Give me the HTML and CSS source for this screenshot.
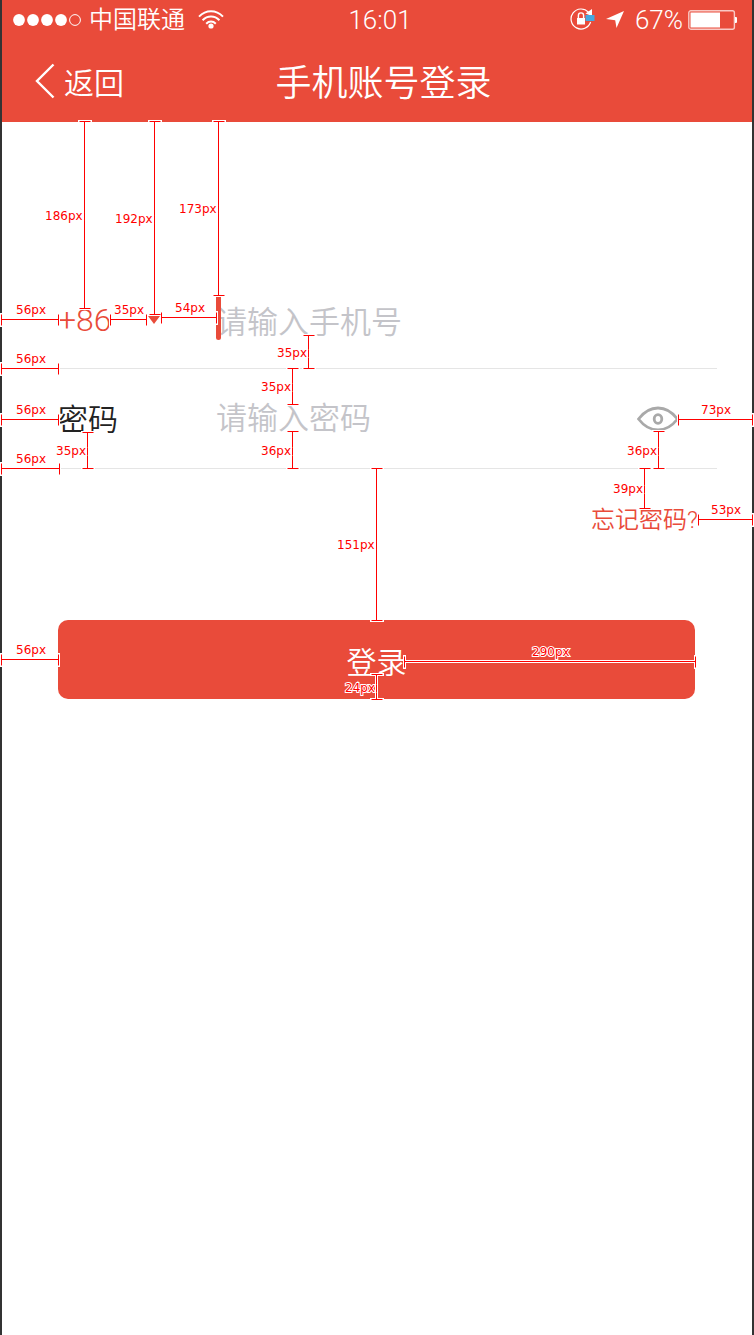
FILE: index.html
```
<!DOCTYPE html>
<html lang="zh-CN">
<head>
<meta charset="utf-8">
<meta name="viewport" content="width=device-width, initial-scale=1">
<title>手机账号登录</title>
<link rel="stylesheet" href="styles.css">
</head>
<body>
<div class="screen">
  <header class="header">
    <div class="status">
      <div class="status-left">
        <svg class="signal" width="70" height="14" viewBox="0 0 70 14" aria-hidden="true">
          <g fill="#fff"><circle cx="7" cy="7" r="5.9"/><circle cx="21" cy="7" r="5.9"/><circle cx="35" cy="7" r="5.9"/><circle cx="49" cy="7" r="5.9"/></g>
          <circle cx="63" cy="7" r="5.4" fill="none" stroke="#fff"/>
        </svg>
        <span class="carrier">中国联通</span>
        <svg class="wifi" width="26" height="20" viewBox="0 0 26 20" aria-hidden="true">
          <g fill="none" stroke="#fff" stroke-width="2"><path d="M1 6.600C8-.6 18-.6 25 6.600"/><path d="M4.600 10.200c4.800-5 12-5 16.800 0"/><path d="M8.200 13.700c2.800-2.800 6.800-2.800 9.600 0"/></g>
          <circle cx="13" cy="16" r="2.600" fill="#fff"/>
        </svg>
      </div>
      <time class="clock">16:01</time>
      <div class="status-right">
        <svg class="lock" width="26" height="22" viewBox="0 0 26 22" aria-hidden="true">
          <path d="M18.400 4.200A10 10 0 1 0 20.600 14" fill="none" stroke="#fff" stroke-width="1.200"/>
          <path d="M15.500 5.500L22 1v7z" fill="#fff"/>
          <path d="M7 10h8v6.500H7z" fill="#fff"/>
          <path d="M8.400 10V7.500a2.600 2.600 0 0 1 5.200 0V10" fill="none" stroke="#fff" stroke-width="1.400"/>
          <path d="M15.500 7h9v6h-9z" fill="#45a7df"/>
        </svg>
        <svg class="location" width="18" height="17" viewBox="0 0 18 17" aria-hidden="true"><path d="M18 0L10.500 17 9.200 9.200 0 8z" fill="#fff"/></svg>
        <span class="percent">67%</span>
        <svg class="battery" width="50" height="20" viewBox="0 0 50 20" aria-hidden="true">
          <rect x=".8" y=".8" width="45.600" height="18.400" rx="2" fill="none" stroke="#fff" stroke-opacity=".7" stroke-width="1.400"/>
          <path d="M2.500 2.500H32v15H2.500zM47 7h1q1 0 1 1v4q0 1-1 1h-1z" fill="#fff"/>
        </svg>
      </div>
    </div>
    <nav class="nav">
      <button class="back" type="button">
        <svg width="20" height="36" viewBox="0 0 20 36" aria-hidden="true"><path d="M18.500 1.500L2 18l16.500 16.500" fill="none" stroke="#fff" stroke-width="2.400"/></svg>
        返回
      </button>
      <h1 class="title">手机账号登录</h1>
    </nav>
  </header>

  <form class="form">
    <div class="row row-phone">
      <button class="code" type="button" aria-label="+86">
        <span>+86</span>
        <svg width="12" height="8" viewBox="0 0 12 8" aria-hidden="true"><path d="M0 0h12L6 8z" fill="#e94b3a"/></svg>
      </button>
      <div class="field">
        <input class="input" type="tel" placeholder="请输入手机号" aria-label="手机号">
        <span class="caret"></span>
      </div>
    </div>
    <div class="row row-password">
      <label class="label" for="password">密码</label>
      <input class="input" id="password" type="password" placeholder="请输入密码">
      <button class="reveal" type="button" aria-label="显示密码">
        <svg width="42" height="26" viewBox="0 0 42 26" aria-hidden="true"><g fill="none" stroke="#a9a9a9" stroke-width="2.800"><path d="M1.500 13Q10 2 21 2t19.500 11Q32 24 21 24T1.500 13z"/><ellipse cx="21" cy="13" rx="3.800" ry="4.300"/></g></svg>
      </button>
    </div>
    <a class="forgot" href="#">忘记密码?</a>
    <button class="submit" type="submit">登录</button>
  </form>

  <svg class="specs" width="754" height="710" viewBox="0 0 754 710">
    <defs>
      <path id="lines" transform="translate(.5 .5)" d="
        M84 121V308M79 121h11M79 308h11
        M154 121V314M149 121h11M149 314h11
        M218 121V295M213 121h11M213 295h11
        M1 319H58M1 314v11M58 314v11
        M110 319H146M110 314v11M146 314v11
        M161 317H216M161 312v11M216 312v11
        M308 335V368M303 335h11M303 368h11
        M1 368H58M1 363v11M58 363v11
        M292 368V404M287 368h11M287 404h11
        M1 419H58M1 414v11M58 414v11
        M292 431V468M287 431h11M287 468h11
        M87 432V468M82 432h11M82 468h11
        M1 468H59M1 463v11M59 463v11
        M658 431V468M653 431h11M653 468h11
        M678 419H752M678 414v11M752 414v11
        M644 468V508M639 468h11M639 508h11
        M698 519H752M698 514v11M752 514v11
        M376 468V620M371 468h11M371 620h11
        M1 659H58M1 654v11M58 654v11
        M404 661H695M404 656v11M695 656v11
        M376 674V699M371 674h11M371 699h11"/>
    </defs>
    <use class="halo" href="#lines"/>
    <use class="rule" href="#lines"/>
    <g class="sizes">
      <text x="45" y="220">186px</text>
      <text x="115" y="223">192px</text>
      <text x="179" y="213">173px</text>
      <text x="16" y="314">56px</text>
      <text x="114" y="314">35px</text>
      <text x="175" y="312">54px</text>
      <text x="277" y="357">35px</text>
      <text x="16" y="363">56px</text>
      <text x="261" y="391">35px</text>
      <text x="16" y="414">56px</text>
      <text x="701" y="414">73px</text>
      <text x="56" y="455">35px</text>
      <text x="261" y="455">36px</text>
      <text x="627" y="455">36px</text>
      <text x="16" y="463">56px</text>
      <text x="613" y="493">39px</text>
      <text x="711" y="514">53px</text>
      <text x="337" y="549">151px</text>
      <text x="16" y="654">56px</text>
      <text x="532" y="656">290px</text>
      <text x="345" y="692">24px</text>
    </g>
  </svg>
</div>
</body>
</html>
```
FILE: styles.css
```
* { box-sizing: border-box; }

body {
  margin: 0;
  background: #fff;
  color: #222;
  font-family: Roboto, "Noto Sans CJK SC", sans-serif;
  font-weight: 350;
}

button, input {
  margin: 0;
  padding: 0;
  border: 0;
  background: none;
  color: inherit;
  font: inherit;
}

svg { display: block; flex: none; }

.screen {
  position: relative;
  min-height: 100vh;
  border: solid #333;
  border-width: 0 2px;
}

.header { background: #e94b3a; color: #fff; }

.status {
  display: grid;
  grid-template-columns: 1fr auto 1fr;
  align-items: center;
  height: 40px;
  padding: 0 14px 0 10px;
}

.status-left, .status-right { display: flex; align-items: center; }
.status-right { justify-content: flex-end; }
.carrier { margin-left: 7px; font-size: 24px; line-height: 40px; }
.wifi { margin-left: 13px; }
.clock { margin-left: 10px; font-size: 26px; font-weight: 300; }
.lock, .location { margin-bottom: 2px; }
.location { margin-left: 10px; margin-right: 11px; }
.percent { font-size: 26px; font-weight: 300; }
.battery { margin-left: 5px; }

.nav {
  display: grid;
  grid-template-columns: 1fr auto 1fr;
  align-items: center;
  height: 82px;
  padding: 0 20px 0 33px;
}

.back {
  display: flex;
  align-items: center;
  gap: 9px;
  justify-self: start;
  font-size: 30px;
}

.title { margin: 0; padding-bottom: 3px; font-size: 36px; font-weight: 350; }

.form {
  display: flex;
  flex-direction: column;
  padding: 154px 0 0 56px;
}

.row {
  display: grid;
  align-items: center;
  margin-right: 35px;
  border-bottom: 1px solid #e5e5e5;
  font-size: 30px;
}

.row-phone { grid-template-columns: 158px 1fr; height: 93px; }
.row-password { grid-template-columns: 158px 1fr auto; height: 100px; }

.code {
  display: flex;
  align-items: center;
  gap: 36px;
  padding-bottom: 4px;
  color: #e94b3a;
  font-size: 32px;
  font-weight: 300;
}

.label { padding-bottom: 3px; }

.field { position: relative; }
.input { width: 100%; height: 48px; font-size: 31px; outline: none; }
.input::placeholder { color: #c4c4c9; opacity: 1; }

.caret {
  position: absolute;
  left: 0;
  top: -1px;
  width: 5px;
  height: 43px;
  border-radius: 0 0 3px 3px;
  background: #e94b3a;
}

.reveal { margin-right: 38px; }

.forgot {
  align-self: flex-end;
  margin: 33px 54px 0 0;
  color: #e94b3a;
  font-size: 24px;
  line-height: 36px;
  text-decoration: none;
}

.submit {
  height: 79px;
  margin: 82px 57px 0 0;
  border-radius: 10px;
  background: #e94b3a;
  color: #fff;
  font-size: 30px;
}

/* Measurement layer drawn above the form */
.specs {
  position: absolute;
  left: -2px;
  top: 0;
  pointer-events: none;
}

.halo { fill: none; stroke: #fff; stroke-width: 3px; stroke-linecap: square; }
.rule { fill: none; stroke: #f00; }

.sizes {
  fill: #f00;
  stroke: #fff;
  stroke-width: 2px;
  paint-order: stroke;
  font: 400 12px "DejaVu Sans", sans-serif;
}
```
